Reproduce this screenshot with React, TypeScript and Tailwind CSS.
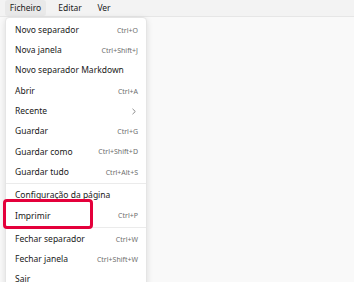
import React from 'react';

type Item = { label: string; shortcut?: string; submenu?: boolean } | 'sep';

const ITEMS: Item[] = [
  { label: 'Novo separador', shortcut: 'Ctrl+O' },
  { label: 'Nova janela', shortcut: 'Ctrl+Shift+J' },
  { label: 'Novo separador Markdown' },
  { label: 'Abrir', shortcut: 'Ctrl+A' },
  { label: 'Recente', submenu: true },
  { label: 'Guardar', shortcut: 'Ctrl+G' },
  { label: 'Guardar como', shortcut: 'Ctrl+Shift+D' },
  { label: 'Guardar tudo', shortcut: 'Ctrl+Alt+S' },
  'sep',
  { label: 'Configuração da página' },
  { label: 'Imprimir', shortcut: 'Ctrl+P' },
  'sep',
  { label: 'Fechar separador', shortcut: 'Ctrl+W' },
  { label: 'Fechar janela', shortcut: 'Ctrl+Shift+W' },
  { label: 'Sair' },
];

export default function App() {
  return (
    <div
      className="relative w-[354px] h-[282px] overflow-hidden bg-[#f9f9f9] text-[#202020]"
      style={{ fontFamily: '"Noto Sans", "Open Sans", sans-serif' }}
    >
      {/* Menu bar */}
      <div className="flex h-[17px] items-center border-b border-[#e6e6e6] bg-[#f3f3f3] pl-[5px] text-[8.5px]">
        <div className="flex h-full w-[41px] items-center justify-center rounded-[3px] bg-[#e9e9e9]">Ficheiro</div>
        <div className="ml-[7px] flex h-full w-[34px] items-center justify-center">Editar</div>
        <div className="ml-[5px] flex h-full w-[24px] items-center justify-center">Ver</div>
      </div>

      {/* Dropdown */}
      <div className="absolute left-[5px] top-[17px] w-[142px] rounded-[4px] border border-[#e5e5e5] bg-white pt-[2px] shadow-[0_2px_6px_rgba(0,0,0,0.12)]">
        {ITEMS.map((item, i) =>
          item === 'sep' ? (
            <div key={i} className="flex h-[3px] items-center">
              <div className="h-px w-full bg-[#ebebeb]" />
            </div>
          ) : (
            <div key={i} className="flex h-[20.3px] items-center justify-between pl-[9px] pr-[8px]">
              <span className="text-[8.5px] leading-none">{item.label}</span>
              {item.shortcut && (
                <span className="text-[7px] leading-none text-[#6e6e6e]">{item.shortcut}</span>
              )}
              {item.submenu && (
                <svg width="6" height="7" viewBox="0 0 6 7" className="mr-[1px]">
                  <path d="M1.5 0.8 L4.3 3.5 L1.5 6.2" fill="none" stroke="#6e6e6e" strokeWidth="0.8" />
                </svg>
              )}
            </div>
          )
        )}
      </div>

      {/* Highlight box */}
      <div className="absolute left-[3px] top-[199px] h-[30px] w-[90px] rounded-[4px] border-[3px] border-[#e4003b]" />
    </div>
  );
}
